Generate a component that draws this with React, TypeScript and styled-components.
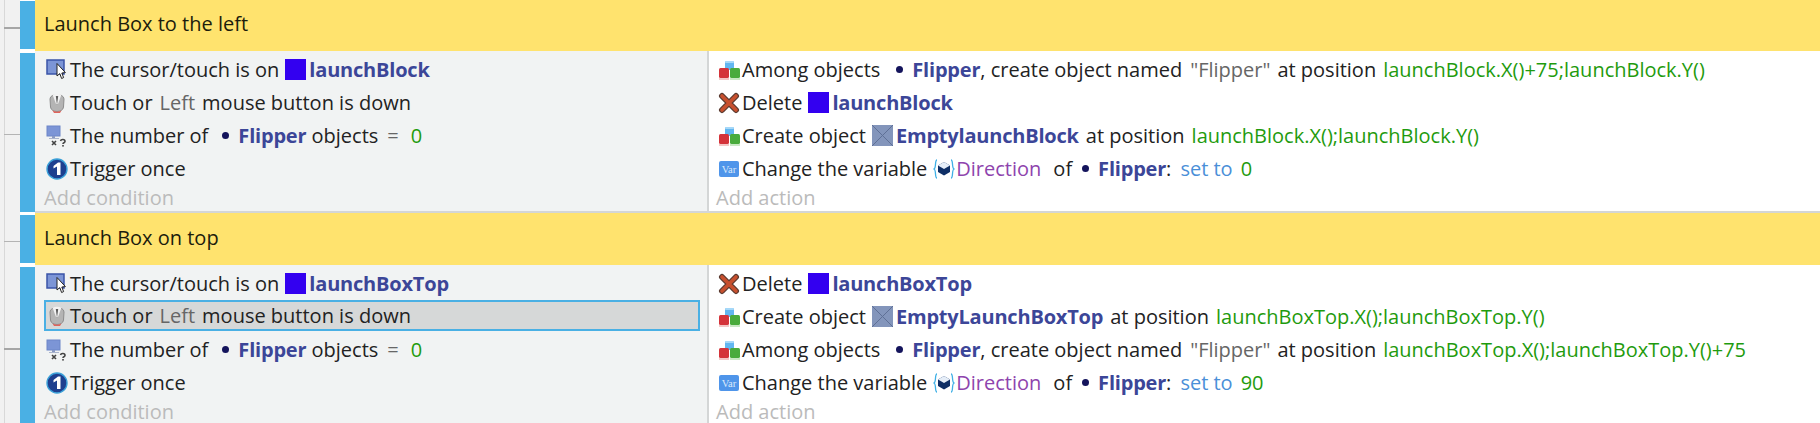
import React from "react";
import styled, { createGlobalStyle } from "styled-components";

const GlobalStyle = createGlobalStyle`
  html, body {
    margin: 0;
    height: 423px;
    overflow: hidden;
    background: #fff;
  }
  body {
    font-family: "Open Sans", "Noto Sans", sans-serif;
    font-size: 20px;
    color: #222;
  }
`;

const CursorIcon = () => (
  <svg width="22" height="22" viewBox="0 0 22 22">
    <rect x="1" y="1" width="17" height="14" fill="#7c95d6" stroke="#3a54a8" strokeWidth="1.5" />
    <path d="M11 4.5 L11 17 L13.8 14.6 L15.6 19.5 L17.6 18.6 L15.8 14 L19.4 13.6 Z" fill="#fff" stroke="#222" strokeWidth="1" />
  </svg>
);

const MouseIcon = () => (
  <svg width="22" height="22" viewBox="0 0 22 22">
    <path d="M4 7 C4 1 18 1 18 7 L17.5 15 C17 21 5 21 4.5 15 Z" fill="#b4b4b4" stroke="#8d8d8d" />
    <path d="M6.5 2.5 L10 12 L12 12 L15.5 2.5 C13 1.5 9 1.5 6.5 2.5 Z" fill="#f2f2f2" />
    <path d="M9.8 4 L11 13 L12.2 4 Z" fill="#5c5c5c" />
    <path d="M6.5 18.5 C9 20 13 20 15.5 18.5 L14 21 L8 21 Z" fill="#e0645c" />
  </svg>
);

const CountIcon = () => (
  <svg width="22" height="22" viewBox="0 0 22 22">
    <rect x="1" y="1" width="13" height="10" fill="#7c95d6" stroke="#6d86c8" />
    <rect x="6" y="11" width="3" height="2" fill="#8a9ac4" />
    <rect x="3" y="13" width="10" height="1" fill="#aab4cc" />
    <path d="M6 16 L10 20 M10 16 L6 20" stroke="#444" strokeWidth="1.6" />
    <path d="M14.5 16 C15 14 19 14 19 16.5 C19 18 17 17.5 17 19" fill="none" stroke="#444" strokeWidth="1.6" />
    <rect x="16.2" y="20" width="1.6" height="1.6" fill="#444" />
  </svg>
);

const OnceIcon = () => (
  <svg width="22" height="22" viewBox="0 0 22 22">
    <circle cx="11" cy="11" r="10" fill="#1d3f8f" stroke="#3aa0d8" strokeWidth="1.4" />
    <path d="M7.5 8 L12 4.5 L14.5 4.5 L14.5 17 L11 17 L11 8.5 L7.5 10.5 Z" fill="#fff" />
  </svg>
);

const CubesIcon = () => (
  <svg width="22" height="22" viewBox="0 0 22 22">
    <rect x="7" y="2" width="9" height="9" rx="1.5" fill="#62b6f0" />
    <rect x="7" y="2" width="9" height="2" rx="1" fill="#a6d8f8" />
    <rect x="1" y="9" width="10" height="10" rx="1.5" fill="#d4333a" />
    <rect x="12" y="9" width="10" height="10" rx="1.5" fill="#49ab3c" />
    <rect x="1" y="19" width="10" height="2" fill="#f3c6c6" />
    <rect x="12" y="19" width="10" height="2" fill="#c9e8c4" />
  </svg>
);

const DeleteIcon = () => (
  <svg width="22" height="22" viewBox="0 0 22 22">
    <path d="M4 4 L18 18 M18 4 L4 18" stroke="#5a3a30" strokeWidth="6" strokeLinecap="round" />
    <path d="M4 4 L18 18 M18 4 L4 18" stroke="#c8502e" strokeWidth="3.6" strokeLinecap="round" />
  </svg>
);

const VarIcon = () => (
  <svg width="22" height="22" viewBox="0 0 22 22">
    <rect x="1" y="3" width="20" height="16" rx="2" fill="#4f95ea" />
    <text x="11" y="15" textAnchor="middle" fontFamily="'Liberation Serif', serif" fontSize="10.5" fill="#dbe9fb">Var</text>
  </svg>
);

const ScopeIcon = () => (
  <svg width="22" height="22" viewBox="0 0 22 22">
    <path d="M4 2 C1.5 2 3.5 10 1 11 C3.5 12 1.5 20 4 20" fill="none" stroke="#3fb0e6" strokeWidth="1.3" />
    <path d="M18 2 C20.5 2 18.5 10 21 11 C18.5 12 20.5 20 18 20" fill="none" stroke="#3fb0e6" strokeWidth="1.3" />
    <path d="M11 4 L17 7.5 L17 14 L11 17.5 L5 14 L5 7.5 Z" fill="#0f2f66" />
    <path d="M11 4 L17 7.5 L11 11 L5 7.5 Z" fill="#e6eef8" />
  </svg>
);

const BlockThumb = () => (
  <svg width="21" height="21" viewBox="0 0 21 21">
    <rect width="21" height="21" fill="#3300f0" />
  </svg>
);

const EmptyThumb = () => (
  <svg width="21" height="21" viewBox="0 0 21 21">
    <rect width="21" height="21" fill="#8395bb" />
    <path d="M0 0 L21 21 M21 0 L0 21" stroke="#5f7096" strokeWidth="1" />
  </svg>
);

const Dot = styled.i<{ $gap?: number }>`
  display: inline-block;
  width: 7px;
  height: 7px;
  border-radius: 50%;
  background: #14145c;
  margin: 0 9px 0 ${(p) => p.$gap ?? 14}px;
`;

const ObjectName = styled.b<{ $after?: number; $flush?: boolean }>`
  color: #3c4698;
  font-weight: 700;
  letter-spacing: -0.2px;
  margin: 0 ${(p) => p.$after ?? 0}px 0 ${(p) => (p.$flush ? 0 : 3)}px;
`;

const Thumb = styled.span<{ $gap?: number }>`
  display: inline-flex;
  margin-left: ${(p) => p.$gap ?? 6}px;
`;

const Muted = styled.span<{ $before?: number }>`
  color: #666;
  margin: 0 7px 0 ${(p) => p.$before ?? 7}px;
`;

const Value = styled.span<{ $gap?: number }>`
  color: #1f9b0e;
  margin-left: ${(p) => p.$gap ?? 7}px;
`;

const Operator = styled.span`
  color: #4a8fd8;
  margin-left: 9px;
`;

const VarName = styled.span`
  color: #8e44ad;
  margin: 0 12px 0 1px;
`;

const Plain = styled.span`
  white-space: pre;
`;

const IconSlot = styled.span`
  display: inline-flex;
  flex: none;
  width: 24px;
`;

const Line = styled.div<{ $selected?: boolean }>`
  display: flex;
  align-items: center;
  height: ${(p) => (p.$selected ? 31 : 33)}px;
  margin-bottom: ${(p) => (p.$selected ? 2 : 0)}px;
  padding-left: 2px;
  box-sizing: border-box;
  white-space: pre;
  background: ${(p) => (p.$selected ? "#d6d8d8" : "transparent")};
  outline: ${(p) => (p.$selected ? "2px solid #4ab0e4" : "none")};
  outline-offset: -2px;
`;

const AddLine = styled.div`
  height: 26px;
  line-height: 26px;
  color: #bbb;
`;

const Block = styled.section`
  display: grid;
  grid-template-columns: 20px 15px 1fr;
`;

const Gutter = styled.div<{ $lineTop: number; $strong?: boolean }>`
  position: relative;
  background: linear-gradient(#d8d8d8, #d8d8d8) 4px 0 / 1px 100% no-repeat #f1f1f1;

  &::before {
    content: "";
    position: absolute;
    left: 4px;
    right: 0;
    top: ${(p) => p.$lineTop}px;
    height: ${(p) => (p.$strong ? 2 : 1)}px;
    background: ${(p) => (p.$strong ? "#a6a6a6" : "#b4b4b4")};
  }
`;

const Handle = styled.div<{ $top: number; $bottom: number }>`
  background: #4ab0e4;
  margin: ${(p) => p.$top}px 0 ${(p) => p.$bottom}px;
`;

const Heading = styled.div`
  height: 52px;
  line-height: 50px;
  padding-left: 9px;
  background: #ffe36e;
  color: #1c1c0c;
`;

const Panels = styled.div`
  display: grid;
  grid-template-columns: 672px 1fr;
  height: 162px;
  box-sizing: border-box;
  border-bottom: 2px solid #d4d6d6;
`;

const Conditions = styled.div`
  background: #f1f3f3;
  padding: 2px 7px 0 9px;
`;

const Actions = styled.div`
  background: #fff;
  border-left: 2px solid #d4d6d6;
  padding: 2px 0 0 7px;
`;

const Page = styled.main`
  margin-top: -1px;
`;

type ObjectProps = { name: string; after?: number };

const BlockObject = ({ name }: ObjectProps) => (
  <>
    <Thumb><BlockThumb /></Thumb>
    <ObjectName>{name}</ObjectName>
  </>
);

const EmptyObject = ({ name, after }: ObjectProps) => (
  <>
    <Thumb><EmptyThumb /></Thumb>
    <ObjectName $after={after}>{name}</ObjectName>
  </>
);

const Flipper = ({ gap }: { gap?: number }) => (
  <>
    <Dot $gap={gap} />
    <ObjectName $flush>Flipper</ObjectName>
  </>
);

const ConditionList = ({ target, selected }: { target: string; selected?: boolean }) => (
  <Conditions>
    <Line>
      <IconSlot><CursorIcon /></IconSlot>
      <Plain>The cursor/touch is on</Plain>
      <BlockObject name={target} />
    </Line>
    <Line $selected={selected}>
      <IconSlot><MouseIcon /></IconSlot>
      <Plain>Touch or</Plain>
      <Muted>Left</Muted>
      <Plain>mouse button is down</Plain>
    </Line>
    <Line>
      <IconSlot><CountIcon /></IconSlot>
      <Plain>The number of</Plain>
      <Flipper />
      <Plain> objects</Plain>
      <Muted $before={9}>=</Muted>
      <Value $gap={5}>0</Value>
    </Line>
    <Line>
      <IconSlot><OnceIcon /></IconSlot>
      <Plain>Trigger once</Plain>
    </Line>
    <AddLine>Add condition</AddLine>
  </Conditions>
);

const AmongLine = ({ position }: { position: string }) => (
  <Line>
    <IconSlot><CubesIcon /></IconSlot>
    <Plain>Among objects</Plain>
    <Flipper gap={16} />
    <Plain>, create object named</Plain>
    <Muted $before={8}>"Flipper"</Muted>
    <Plain>at position</Plain>
    <Value>{position}</Value>
  </Line>
);

const DeleteLine = ({ target }: { target: string }) => (
  <Line>
    <IconSlot><DeleteIcon /></IconSlot>
    <Plain>Delete</Plain>
    <BlockObject name={target} />
  </Line>
);

const CreateLine = ({ target, position }: { target: string; position: string }) => (
  <Line>
    <IconSlot><CubesIcon /></IconSlot>
    <Plain>Create object</Plain>
    <EmptyObject name={target} after={7} />
    <Plain>at position</Plain>
    <Value>{position}</Value>
  </Line>
);

const VariableLine = ({ value }: { value: string }) => (
  <Line>
    <IconSlot><VarIcon /></IconSlot>
    <Plain>Change the variable</Plain>
    <Thumb><ScopeIcon /></Thumb>
    <VarName>Direction</VarName>
    <Plain>of</Plain>
    <Flipper gap={10} />
    <Plain>:</Plain>
    <Operator>set to</Operator>
    <Value $gap={8}>{value}</Value>
  </Line>
);

const EventBlock = ({ title, children, first }: { title: string; children: React.ReactNode; first?: boolean }) => (
  <Block>
    <Gutter $lineTop={28} $strong={first} />
    <Handle $top={2} $bottom={2} />
    <Heading>{title}</Heading>
    <Gutter $lineTop={83} $strong={!first} />
    <Handle $top={2} $bottom={1} />
    {children}
  </Block>
);

export default function App() {
  return (
    <Page>
      <GlobalStyle />
      <EventBlock title="Launch Box to the left" first>
        <Panels>
          <ConditionList target="launchBlock" />
          <Actions>
            <AmongLine position="launchBlock.X()+75;launchBlock.Y()" />
            <DeleteLine target="launchBlock" />
            <CreateLine target="EmptylaunchBlock" position="launchBlock.X();launchBlock.Y()" />
            <VariableLine value="0" />
            <AddLine>Add action</AddLine>
          </Actions>
        </Panels>
      </EventBlock>
      <EventBlock title="Launch Box on top">
        <Panels>
          <ConditionList target="launchBoxTop" selected />
          <Actions>
            <DeleteLine target="launchBoxTop" />
            <CreateLine target="EmptyLaunchBoxTop" position="launchBoxTop.X();launchBoxTop.Y()" />
            <AmongLine position="launchBoxTop.X();launchBoxTop.Y()+75" />
            <VariableLine value="90" />
            <AddLine>Add action</AddLine>
          </Actions>
        </Panels>
      </EventBlock>
    </Page>
  );
}
